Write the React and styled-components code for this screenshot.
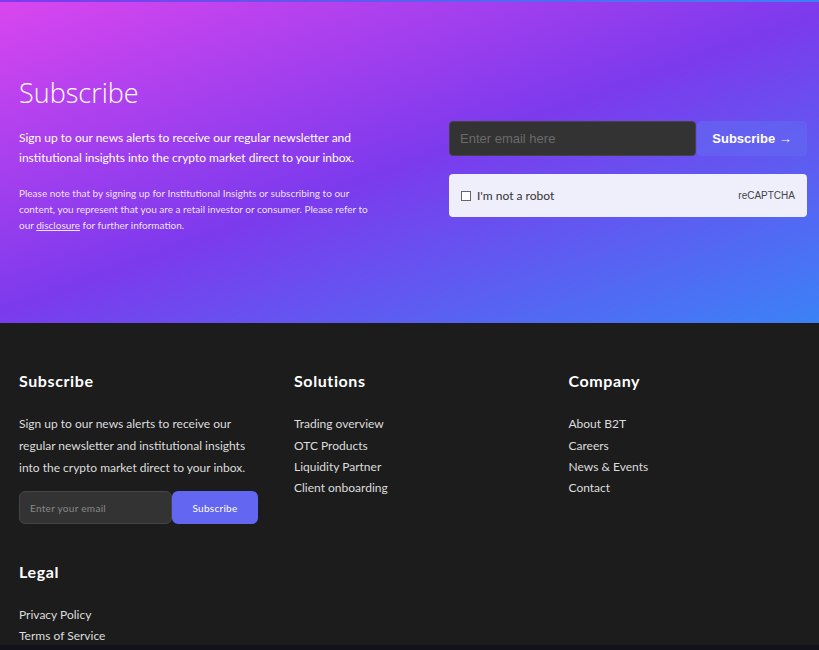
import React from 'react';
import styled, { createGlobalStyle } from 'styled-components';

const GlobalStyle = createGlobalStyle`
    * { box-sizing: border-box; }
    body {
        margin: 0;
        background: #12121a;
        font-family: 'Lato', 'Open Sans', sans-serif;
        color: #fff;
    }
`;

const TopBar = styled.div`
    height: 2px;
    background: linear-gradient(90deg, #7c3aed 0%, #3b82f6 100%);
`;

const Hero = styled.section`
    height: 321px;
    background: linear-gradient(160deg, #d946ef 0%, #7c3aed 50%, #3b82f6 100%);
    padding: 0 12px 0 19px;
    display: grid;
    grid-template-columns: 1fr 1fr;
    column-gap: 72px;
    align-items: start;
`;

const HeroText = styled.div`
    padding-top: 71px;
`;

const HeroTitle = styled.h1`
    margin: 0 0 15px;
    font-family: 'Open Sans', sans-serif;
    font-weight: 300;
    font-size: 27px;
    line-height: 40px;
`;

const HeroLead = styled.p`
    margin: 0 0 17px;
    font-size: 12px;
    line-height: 20px;
    color: #fff;
`;

const HeroNote = styled.p`
    margin: 0;
    font-size: 10px;
    line-height: 16px;
    color: rgba(255, 255, 255, 0.88);

    a {
        color: inherit;
        text-decoration: underline;
    }
`;

const FormColumn = styled.div`
    display: flex;
    flex-direction: column;
    gap: 18px;
    padding-top: 119px;
`;

const EmailRow = styled.form`
    display: flex;
    height: 35px;
`;

const HeroInput = styled.input`
    flex: 1;
    min-width: 0;
    background: #333;
    border: 1px solid #444;
    border-radius: 4px;
    padding: 0 10px;
    font-family: 'Liberation Sans', Arial, sans-serif;
    font-size: 13px;
    color: #fff;
    outline: none;

    &::placeholder { color: #6a6a6a; }
`;

const HeroButton = styled.button`
    width: 110px;
    margin-left: 1px;
    border: none;
    border-radius: 4px;
    background: rgba(99, 102, 241, 0.7);
    color: #fff;
    font-family: 'Liberation Sans', Arial, sans-serif;
    font-weight: 700;
    font-size: 13px;
    cursor: pointer;
`;

const Captcha = styled.div`
    height: 43px;
    background: #efeefb;
    border-radius: 4px;
    display: flex;
    align-items: center;
    justify-content: space-between;
    padding: 0 12px;
    color: #333;
`;

const CaptchaLabel = styled.label`
    display: flex;
    align-items: center;
    gap: 6px;
    font-size: 12px;
`;

const Box = styled.span`
    width: 10px;
    height: 10px;
    border: 1px solid #666;
    background: #fff;
`;

const CaptchaBrand = styled.span`
    font-family: 'Liberation Sans', Arial, sans-serif;
    font-size: 10px;
    color: #444;
`;

const Footer = styled.footer`
    background: #1c1c1c;
    padding: 48px 12px 0 19px;
    display: grid;
    grid-template-columns: repeat(3, 1fr);
    column-gap: 36px;
    row-gap: 38px;
`;

const Column = styled.div``;

const ColTitle = styled.h3`
    margin: 0 0 22px;
    font-size: 16px;
    font-weight: 700;
    line-height: 20px;
    letter-spacing: 0.6px;
`;

const ColText = styled.p`
    margin: 0 0 12px;
    font-size: 12px;
    line-height: 22px;
    color: #ddd;
`;

const LinkList = styled.ul`
    list-style: none;
    margin: 0;
    padding: 0;
`;

const LinkItem = styled.li`
    font-size: 12px;
    line-height: 21.7px;
    color: #ddd;

    &:last-child {
        line-height: 19px;
    }
`;

const MiniForm = styled.form`
    display: flex;
    height: 33px;
    width: 239px;
`;

const MiniInput = styled.input`
    width: 153px;
    background: #333;
    border: 1px solid #444;
    border-radius: 6px;
    padding: 0 10px;
    font-family: 'Lato', sans-serif;
    font-size: 10px;
    letter-spacing: 0.3px;
    color: #fff;
    outline: none;

    &::placeholder { color: #888; }
`;

const MiniButton = styled.button`
    flex: 1;
    border: none;
    border-radius: 6px;
    background: #6366f1;
    color: #fff;
    font-family: 'Lato', sans-serif;
    font-size: 10px;
    letter-spacing: 0.3px;
    cursor: pointer;
`;

const BottomStrip = styled.div`
    height: 10px;
    background: #12121a;
`;

const solutions = ['Trading overview', 'OTC Products', 'Liquidity Partner', 'Client onboarding'];
const company = ['About B2T', 'Careers', 'News & Events', 'Contact'];
const legal = ['Privacy Policy', 'Terms of Service'];

export default function App() {
    return (
        <>
            <GlobalStyle />
            <TopBar />
            <Hero>
                <HeroText>
                    <HeroTitle>Subscribe</HeroTitle>
                    <HeroLead>
                        Sign up to our news alerts to receive our regular newsletter and institutional insights into the crypto market direct to your inbox.
                    </HeroLead>
                    <HeroNote>
                        Please note that by signing up for Institutional Insights or subscribing to our content, you represent that you are a retail investor or consumer. Please refer to our <a href="#">disclosure</a> for further information.
                    </HeroNote>
                </HeroText>
                <FormColumn>
                    <EmailRow onSubmit={e => e.preventDefault()}>
                        <HeroInput type="email" placeholder="Enter email here" />
                        <HeroButton type="submit">Subscribe →</HeroButton>
                    </EmailRow>
                    <Captcha>
                        <CaptchaLabel><Box />I'm not a robot</CaptchaLabel>
                        <CaptchaBrand>reCAPTCHA</CaptchaBrand>
                    </Captcha>
                </FormColumn>
            </Hero>
            <Footer>
                <Column>
                    <ColTitle>Subscribe</ColTitle>
                    <ColText>
                        Sign up to our news alerts to receive our regular newsletter and institutional insights into the crypto market direct to your inbox.
                    </ColText>
                    <MiniForm onSubmit={e => e.preventDefault()}>
                        <MiniInput type="email" placeholder="Enter your email" />
                        <MiniButton type="submit">Subscribe</MiniButton>
                    </MiniForm>
                </Column>
                <Column>
                    <ColTitle>Solutions</ColTitle>
                    <LinkList>
                        {solutions.map(s => <LinkItem key={s}>{s}</LinkItem>)}
                    </LinkList>
                </Column>
                <Column>
                    <ColTitle>Company</ColTitle>
                    <LinkList>
                        {company.map(s => <LinkItem key={s}>{s}</LinkItem>)}
                    </LinkList>
                </Column>
                <Column>
                    <ColTitle>Legal</ColTitle>
                    <LinkList>
                        {legal.map(s => <LinkItem key={s}>{s}</LinkItem>)}
                    </LinkList>
                </Column>
            </Footer>
            <BottomStrip />
        </>
    );
}
